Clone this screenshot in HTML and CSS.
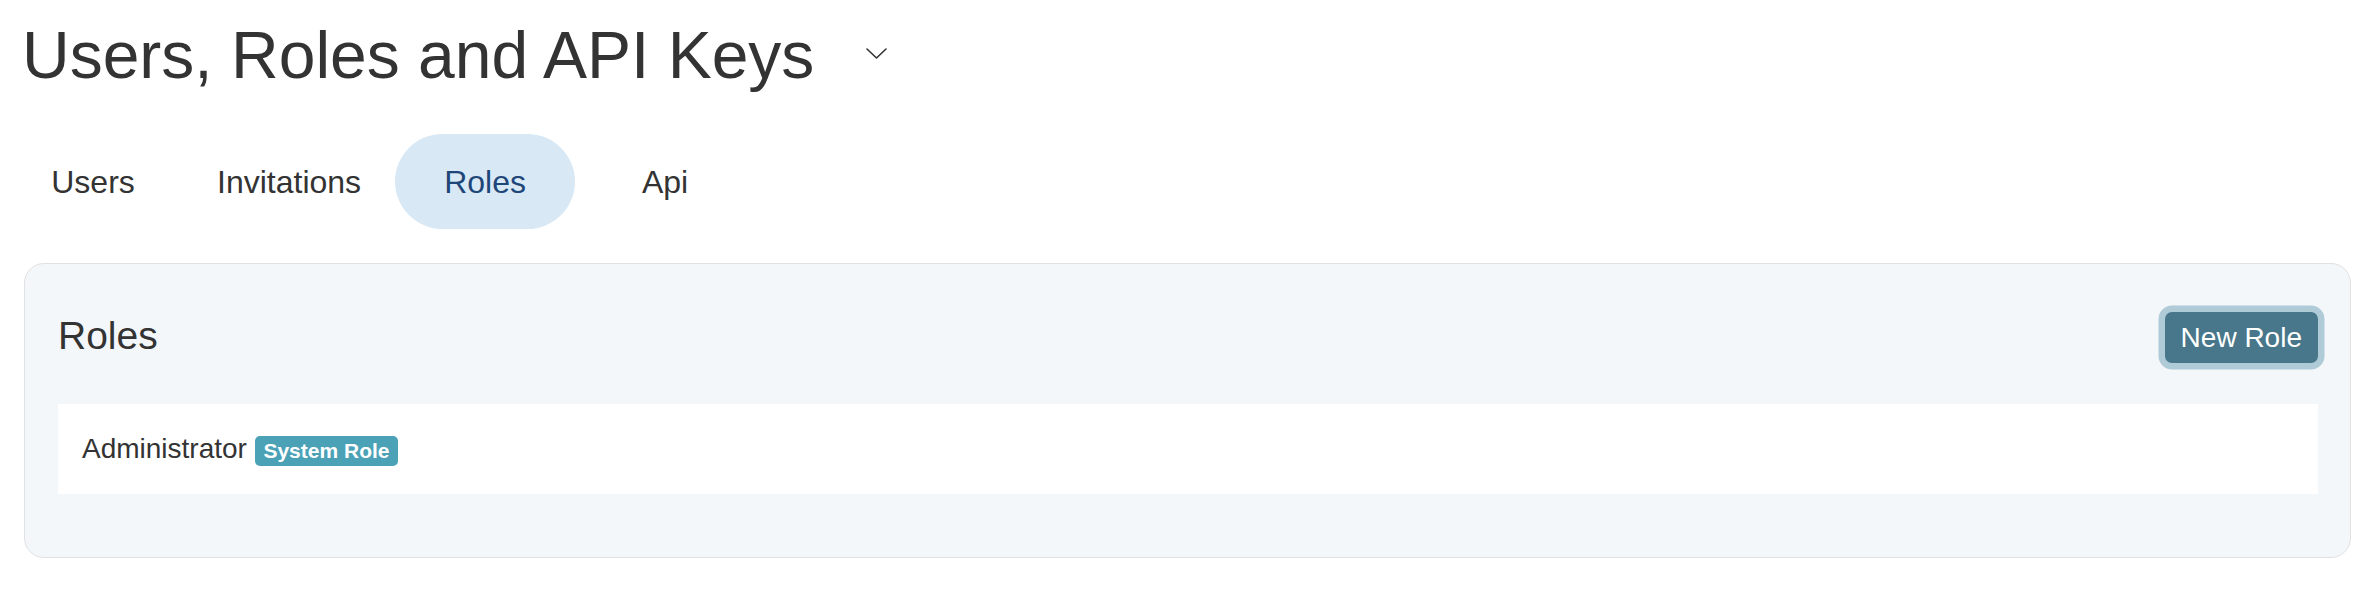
FILE: index.html
```html
<!DOCTYPE html>
<html lang="en">
<head>
<meta charset="utf-8">
<title>Users, Roles and API Keys</title>
<link rel="stylesheet" href="styles.css">
</head>
<body>
<div class="page">
  <header class="page-header">
    <h1 class="page-title">Users, Roles and API Keys</h1>
    <svg class="chevron" width="21" height="11" viewBox="0 0 21 11" aria-hidden="true">
      <polyline points="1,1 10.5,10 20,1" fill="none" stroke="#333" stroke-width="1.6" stroke-linecap="round" stroke-linejoin="round"/>
    </svg>
  </header>
  <nav class="tabs">
    <a class="tab">Users</a>
    <a class="tab">Invitations</a>
    <a class="tab tab-active">Roles</a>
    <a class="tab">Api</a>
  </nav>
  <section class="card">
    <div class="card-header">
      <h2 class="card-title">Roles</h2>
      <button class="btn-primary">New Role</button>
    </div>
    <div class="role-row">Administrator<span class="badge">System Role</span></div>
  </section>
</div>
</body>
</html>
```

FILE: styles.css
```css
html, body {
  margin: 0;
  padding: 0;
  background: #ffffff;
}

body {
  font-family: "Liberation Sans", Arial, Helvetica, sans-serif;
  color: #333333;
}

.page-header {
  display: flex;
  align-items: flex-start;
  margin-top: 16px;
  padding-left: 22px;
}

.page-title {
  margin: 0;
  font-size: 66px;
  line-height: 78px;
  font-weight: 400;
  color: #333333;
}

.chevron {
  margin-left: 52px;
  margin-top: 32px;
  display: block;
}

.tabs {
  display: flex;
  margin-top: 40px;
  margin-left: 3px;
}

.tab {
  display: flex;
  align-items: center;
  justify-content: center;
  box-sizing: border-box;
  min-width: 180px;
  height: 95px;
  padding: 2px 34px 0;
  font-size: 32px;
  color: #333333;
  border-radius: 48px;
  cursor: pointer;
}

.tab-active {
  background: #d8e9f5;
  color: #1f4678;
}

.card {
  margin: 34px 23px 0 24px;
  border: 1px solid #dfe1e3;
  border-radius: 20px;
  background: #f4f7fa;
  padding: 48px 32px 63px 33px;
}

.card-header {
  display: flex;
  align-items: center;
  justify-content: space-between;
  margin-bottom: 41px;
}

.card-title {
  margin: 0 0 4px 0;
  font-size: 39px;
  line-height: 45px;
  font-weight: 400;
  color: #333333;
}

.btn-primary {
  font-family: "Liberation Sans", Arial, Helvetica, sans-serif;
  font-size: 28px;
  line-height: 32px;
  height: 51px;
  padding: 0 16px;
  border: none;
  border-radius: 7px;
  background: #48768a;
  color: #ffffff;
  box-shadow: 0 0 0 6.5px #b0cbd8;
  margin-right: 0;
}

.role-row {
  background: #ffffff;
  height: 90px;
  line-height: 90px;
  padding: 0 24px;
  font-size: 28px;
  color: #333333;
}

.badge {
  display: inline-block;
  margin-left: 8px;
  padding: 0 8.5px;
  line-height: 30px;
  font-size: 21px;
  font-weight: 700;
  color: #ffffff;
  background: #4ba1b6;
  border-radius: 5px;
}
```
